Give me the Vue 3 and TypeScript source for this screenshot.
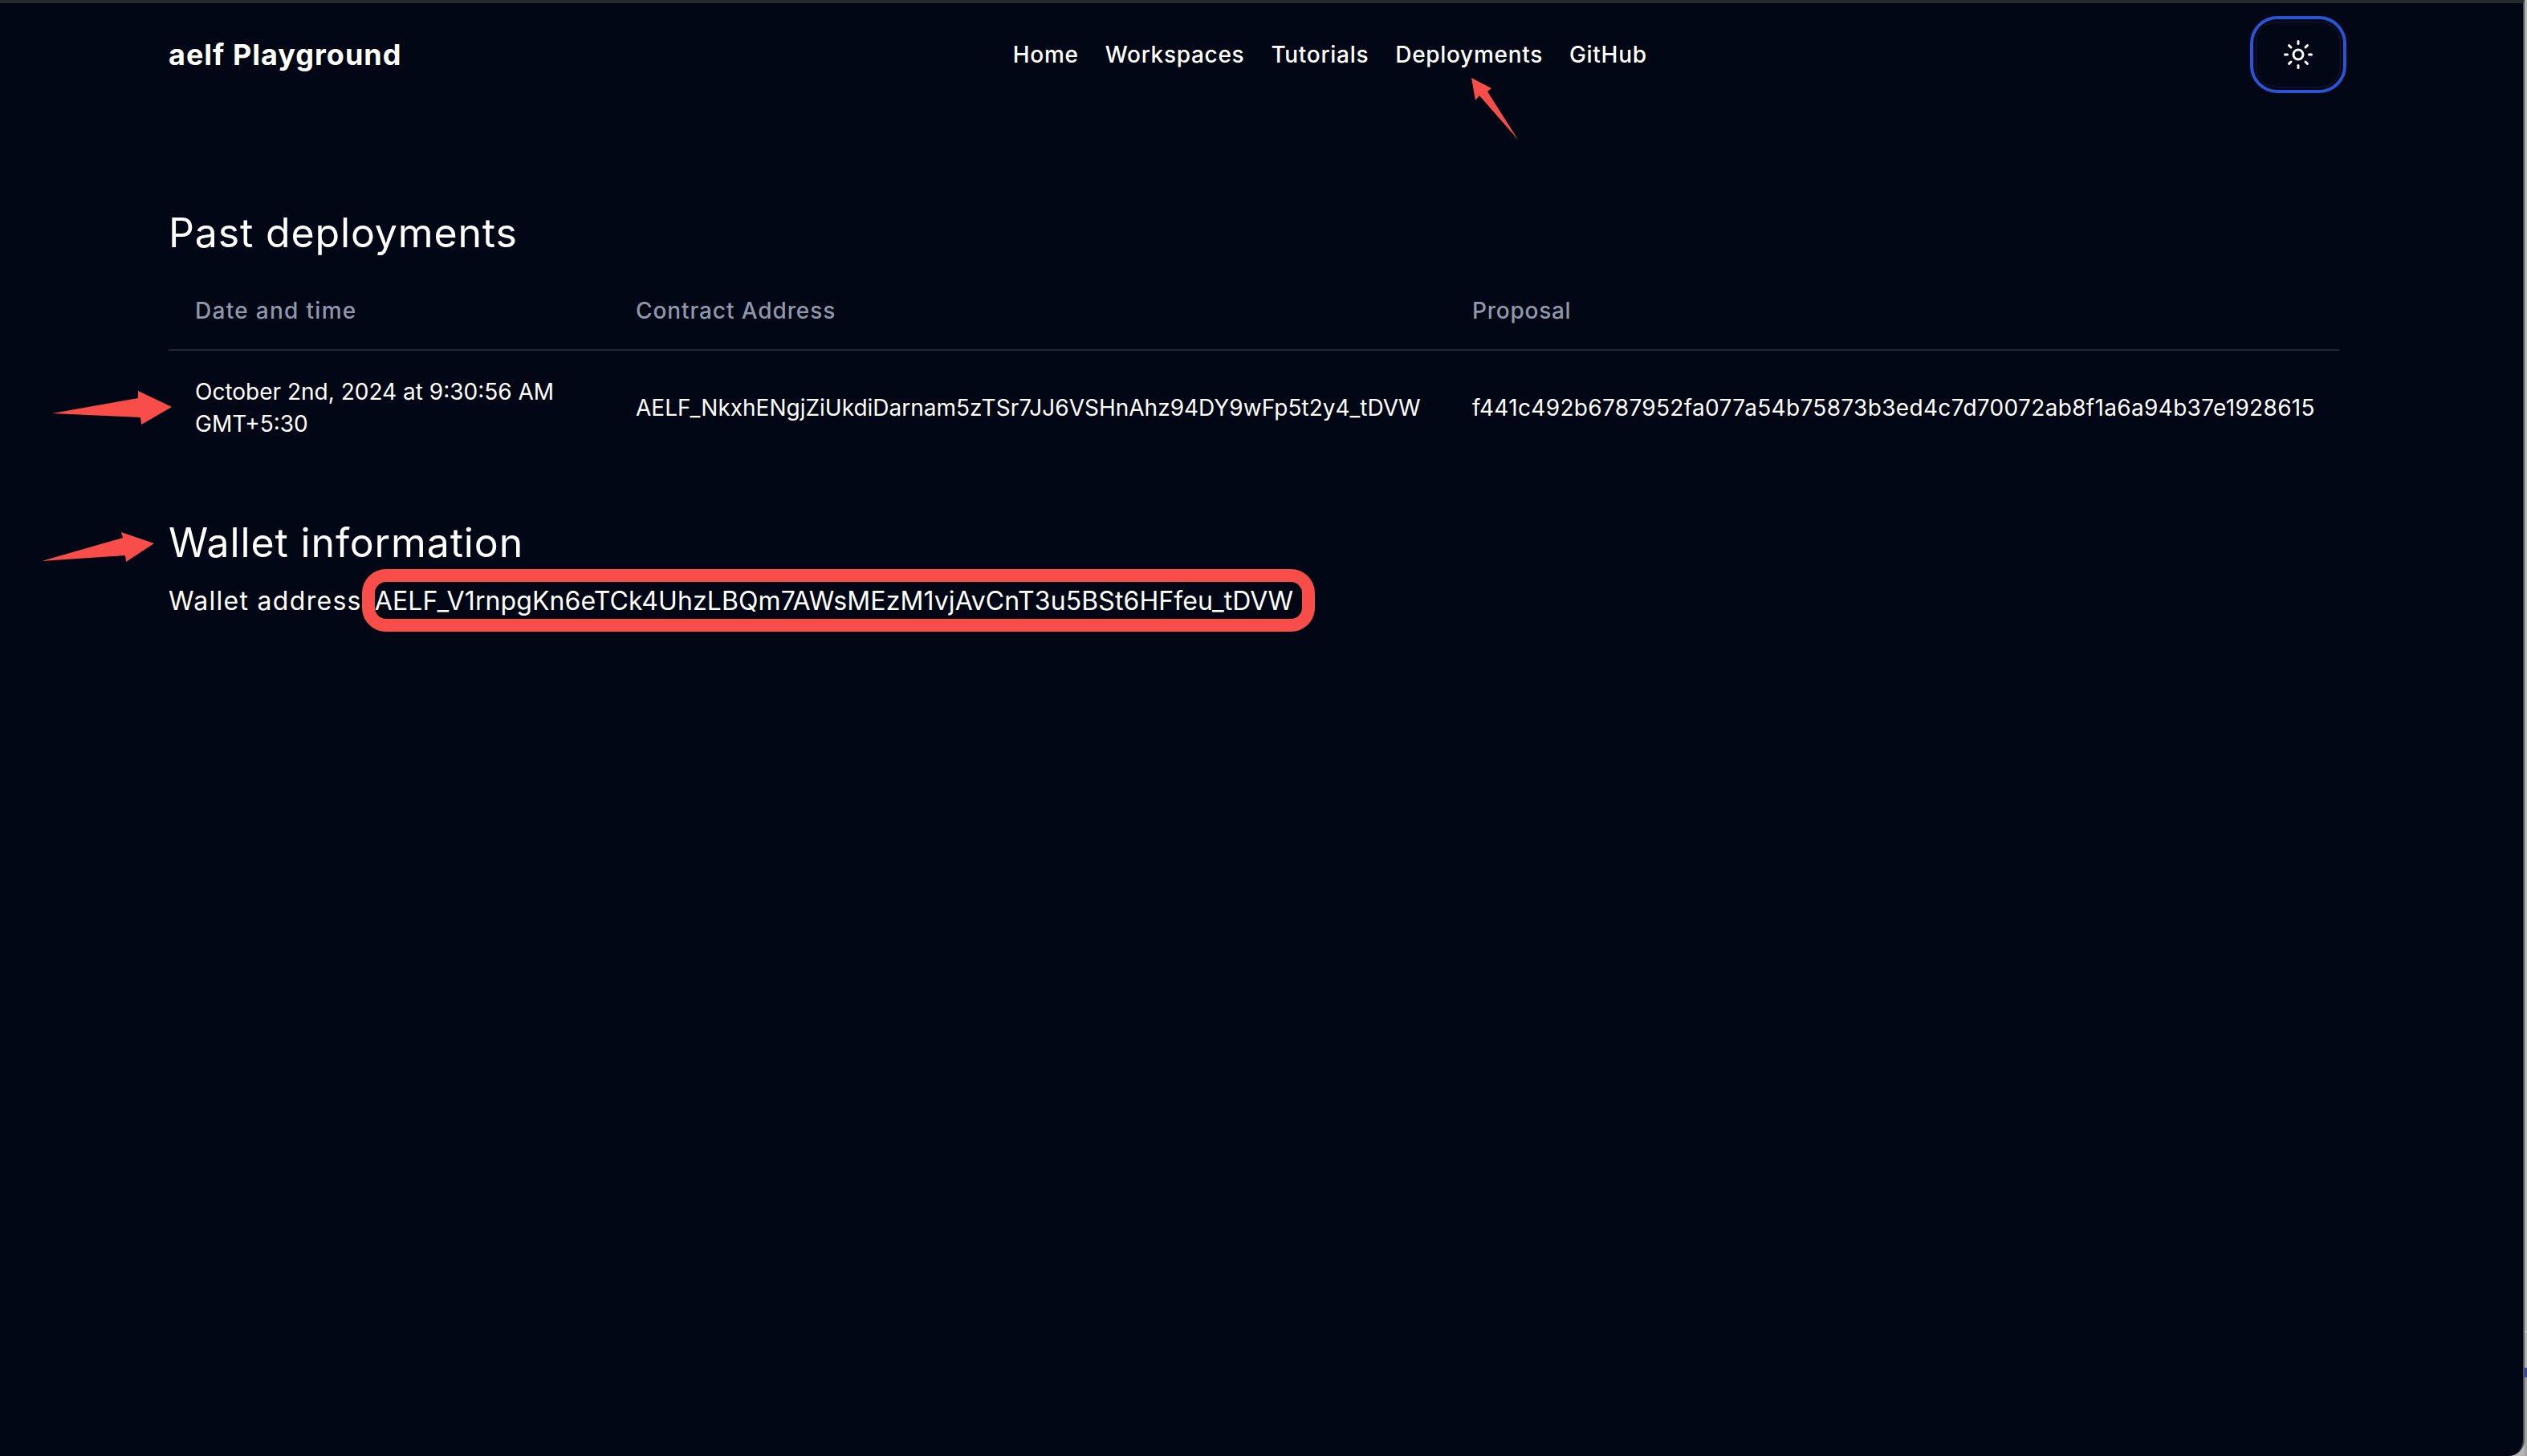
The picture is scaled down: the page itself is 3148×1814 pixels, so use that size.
<script setup lang="ts">
const navLinks = ['Home', 'Workspaces', 'Tutorials', 'Deployments', 'GitHub']

const columns = ['Date and time', 'Contract Address', 'Proposal']

const deployment = {
  contract: 'AELF_NkxhENgjZiUkdiDarnam5zTSr7JJ6VSHnAhz94DY9wFp5t2y4_tDVW',
  proposal: 'f441c492b6787952fa077a54b75873b3ed4c7d70072ab8f1a6a94b37e1928615',
}

const wallet = 'AELF_V1rnpgKn6eTCk4UhzLBQm7AWsMEzM1vjAvCnT3u5BSt6HFfeu_tDVW'

// red annotation arrows drawn over the screenshot
const arrows = [
  '1833,97 1858,110 1853,114 1891,174 1843,119 1838,125',
  '65,515 172,496 172,487 214,507 176,529 175,520',
  '52,699 153,670 151,663 192,677 157,700 156,692',
]
</script>

<template>
  <div class="screen">
    <div class="window">
      <header class="topbar">
        <a class="brand">aelf Playground</a>
        <nav class="nav">
          <a v-for="link in navLinks" :key="link">{{ link }}</a>
        </nav>
        <button class="theme-btn" type="button" aria-label="Toggle theme">
          <svg viewBox="0 0 24 24" width="36" height="36" fill="none" stroke="currentColor" stroke-width="2" stroke-linecap="round">
            <circle cx="12" cy="12" r="4" />
            <path d="M12 1v2M12 21v2M4.4 4.4l1.6 1.6M18 18l1.6 1.6M1 12h2M21 12h2M6 18l-1.6 1.6M19.6 4.4L18 6" />
          </svg>
        </button>
      </header>

      <main class="content">
        <h2 class="title">Past deployments</h2>
        <div class="table">
          <div class="row head">
            <div v-for="col in columns" :key="col" class="cell">{{ col }}</div>
          </div>
          <div class="row body-row">
            <div class="cell">October 2nd, 2024 at 9:30:56 AM<br>GMT+5:30</div>
            <div class="cell">{{ deployment.contract }}</div>
            <div class="cell proposal">{{ deployment.proposal }}</div>
          </div>
        </div>

        <h2 class="title wallet-title">Wallet information</h2>
        <p class="wallet">
          <span class="wallet-label">Wallet address</span>
          <span class="wallet-value">{{ wallet }}</span>
        </p>
      </main>

      <svg class="arrows" width="3148" height="800" viewBox="0 0 3148 800" aria-hidden="true">
        <polygon v-for="points in arrows" :key="points" :points="points" />
      </svg>
    </div>
    <div class="desktop-edge"></div>
  </div>
</template>

<style scoped>
.screen {
  display: flex;
  height: 1814px;
  overflow: hidden;
}

.window {
  position: relative;
  flex: none;
  width: 3145px;
  box-sizing: border-box;
  border-top: 4px solid #24292c;
  border-right: 2px solid #54565c;
  border-bottom-right-radius: 20px;
  background: #010714;
  color: #fff;
  font-family: Inter, "Liberation Sans", sans-serif;
  overflow: hidden;
}

.desktop-edge {
  flex: 1;
  background: linear-gradient(
    to bottom,
    #b4b4b4 1658px,
    #d0d0d0 1658px,
    #d0d0d0 1660px,
    #b4b4b4 1660px,
    #b4b4b4 1704px,
    #2f4f9e 1704px,
    #2f4f9e 1716px,
    #a2a2a2 1716px
  );
}

.topbar {
  display: flex;
  align-items: center;
  justify-content: space-between;
  height: 96px;
  margin-top: 16px;
  padding: 0 220px 0 210px;
}

.brand {
  font-size: 36px;
  font-weight: 700;
  letter-spacing: 1px;
}

.nav {
  display: flex;
  gap: 33px;
  margin-left: 10px;
  font-size: 28px;
  font-weight: 500;
  letter-spacing: 0.7px;
}

.theme-btn {
  position: relative;
  display: flex;
  align-items: center;
  justify-content: center;
  width: 120px;
  height: 96px;
  padding: 0;
  border: 4px solid #2b54d4;
  border-radius: 34px;
  background: transparent;
  color: #fff;
}

.theme-btn::before {
  content: "";
  position: absolute;
  inset: 3px;
  border: 1px solid #10183a;
  border-radius: 26px;
}

.content {
  padding: 138px 229px 0 210px;
}

.title {
  margin: 0;
  font-size: 50px;
  line-height: 72px;
  font-weight: 400;
  letter-spacing: 0.85px;
}

.table {
  margin-top: 12px;
}

.row {
  display: grid;
  grid-template-columns: 549px 1042px 1fr;
  align-items: center;
}

.head {
  height: 99px;
  box-sizing: border-box;
  border-bottom: 2px solid #1f2738;
  color: #8f98aa;
  font-weight: 500;
}

.head .cell:nth-child(1) {
  letter-spacing: 1.3px;
}

.head .cell:nth-child(2) {
  letter-spacing: 0.9px;
}

.head .cell:nth-child(3) {
  letter-spacing: 0.75px;
}

.cell {
  padding-left: 33px;
  font-size: 28px;
  line-height: 40px;
  white-space: nowrap;
}

.proposal {
  letter-spacing: 0.33px;
}

.body-row {
  height: 142px;
}

.wallet-title {
  margin-top: 61px;
}

.wallet {
  display: flex;
  gap: 16px;
  margin: 13px 0 0;
  font-size: 32px;
  line-height: 48px;
}

.wallet-label {
  letter-spacing: 1.3px;
}

.wallet-value {
  position: relative;
  letter-spacing: 0.1px;
}

.wallet-value::after {
  content: "";
  position: absolute;
  inset: -16px -27px -14px -16px;
  border: 16px solid #f94d4a;
  border-radius: 30px;
}

.arrows {
  position: absolute;
  top: -4px;
  left: 0;
  fill: #f94d4a;
  pointer-events: none;
}
</style>

<style>
html,
body {
  margin: 0;
  background: #b4b4b4;
}
</style>
